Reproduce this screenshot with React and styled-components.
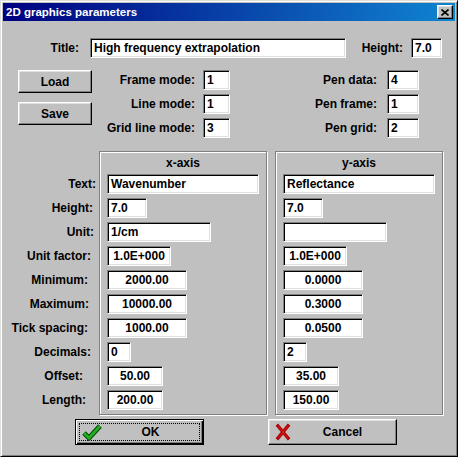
import React from 'react';
import styled, { createGlobalStyle } from 'styled-components';

const Global = createGlobalStyle`
  html, body {
    margin: 0;
    padding: 0;
    background: #c0c0c0;
  }
  * { box-sizing: border-box; }
`;

const Window = styled.div`
  width: 458px;
  height: 457px;
  background: #c0c0c0;
  border: 1px solid;
  border-color: #dfdfdf #000 #000 #dfdfdf;
  box-shadow: inset 1px 1px #fff, inset -1px -1px #808080;
  padding: 2px;
  display: flex;
  flex-direction: column;
  font-family: "Liberation Sans", Arial, sans-serif;
  font-weight: bold;
  font-size: 12px;
  color: #000;
`;

const TitleBar = styled.div`
  height: 18px;
  background: linear-gradient(to right, #000080, #1084d0);
  display: flex;
  align-items: center;
  justify-content: space-between;
  padding: 0 2px 0 3px;
  color: #fff;
  font-size: 11.5px;
`;

const CloseButton = styled.div`
  width: 16px;
  height: 14px;
  background: #c0c0c0;
  border: 1px solid;
  border-color: #fff #000 #000 #fff;
  box-shadow: inset -1px -1px #808080, inset 1px 1px #dfdfdf;
  display: flex;
  align-items: center;
  justify-content: center;
`;

const Body = styled.div`
  flex: 1;
  display: flex;
  flex-direction: column;
  padding-top: 17px;
`;

const TitleRow = styled.div`
  display: flex;
  align-items: center;
  height: 20px;
`;

const Label = styled.div`
  width: ${p => p.$w}px;
  margin-right: ${p => p.$gap}px;
  text-align: right;
  white-space: nowrap;
`;

const Field = styled.div`
  width: ${p => p.$w}px;
  height: 20px;
  flex-shrink: 0;
  background: #fff;
  border: 1px solid;
  border-color: #808080 #fff #fff #808080;
  box-shadow: inset 1px 1px #000, inset -1px -1px #dfdfdf;
  padding: 0 3px;
  display: flex;
  align-items: center;
  justify-content: ${p => (p.$center ? 'center' : 'flex-start')};
  white-space: nowrap;
  overflow: hidden;
`;

const TopSection = styled.div`
  display: flex;
  margin-top: 12px;
`;

const ButtonColumn = styled.div`
  display: flex;
  flex-direction: column;
  gap: 9px;
  margin-left: 15px;
  width: 74px;
`;

const Button = styled.div`
  height: 23px;
  background: #c0c0c0;
  border: 1px solid;
  border-color: #fff #000 #000 #fff;
  box-shadow: inset -1px -1px #808080, inset 1px 1px #dfdfdf;
  display: flex;
  align-items: center;
  justify-content: center;
`;

const ParamGrid = styled.div`
  width: ${p => p.$w}px;
  display: grid;
  grid-template-columns: 1fr ${p => p.$field}px;
  column-gap: ${p => p.$gap}px;
  row-gap: 4px;
  align-items: center;
  align-content: start;
  & > span {
    text-align: right;
    white-space: nowrap;
  }
`;

const AxisSection = styled.div`
  display: flex;
  margin-top: 13px;
  height: 264px;
`;

const LabelColumn = styled.div`
  width: 96px;
  display: flex;
  flex-direction: column;
  gap: 4px;
  padding-top: 23px;
`;

const RowLabel = styled.div`
  height: 20px;
  line-height: 20px;
  text-align: right;
  white-space: nowrap;
  padding-right: ${p => p.$pad}px;
`;

const GroupBox = styled.div`
  width: 168px;
  margin-right: 8px;
  border: 1px solid #808080;
  box-shadow: inset 1px 1px #fff, 1px 1px #fff;
  padding: 2px 7px 0;
  display: flex;
  flex-direction: column;
  gap: 4px;
`;

const GroupTitle = styled.div`
  height: 16px;
  line-height: 18px;
  text-align: center;
`;

const Footer = styled.div`
  display: flex;
  margin-top: 4px;
  padding-left: 72px;
  gap: 64px;
`;

const DialogButton = styled.div`
  width: 129px;
  height: 26px;
  background: #c0c0c0;
  border: 1px solid;
  border-color: ${p => (p.$default ? '#000' : '#fff #000 #000 #fff')};
  box-shadow: ${p =>
    p.$default
      ? 'inset 1px 1px #fff, inset -1px -1px #000, inset -2px -2px #808080'
      : 'inset -1px -1px #808080, inset 1px 1px #dfdfdf'};
  padding: ${p => (p.$default ? '3px' : '2px')};
  display: flex;
`;

const FocusRing = styled.div`
  flex: 1;
  display: flex;
  align-items: center;
  padding-left: 2px;
  border: 1px dotted ${p => (p.$on ? '#000' : 'transparent')};
  & > span {
    flex: 1;
    text-align: center;
  }
`;

const CheckIcon = () => (
  <svg width="20" height="18" viewBox="0 0 20 18">
    <path d="M2 10 L7 15 L18 3" fill="none" stroke="#0d4d0d" strokeWidth="5" strokeLinejoin="miter" />
    <path d="M2 10 L7 15 L18 3" fill="none" stroke="#22b022" strokeWidth="2.6" />
  </svg>
);

const CrossIcon = () => (
  <svg width="18" height="18" viewBox="0 0 18 18">
    <path d="M4 3 L14 15 M14 3 L4 15" fill="none" stroke="#b00000" strokeWidth="3.4" strokeLinecap="square" />
    <path d="M4 3 L14 15 M14 3 L4 15" fill="none" stroke="#d42020" strokeWidth="1" />
  </svg>
);

const CloseGlyph = () => (
  <svg width="8" height="7" viewBox="0 0 8 7">
    <path d="M0.5 0.5 L7.5 6.5 M7.5 0.5 L0.5 6.5" stroke="#000" strokeWidth="1.6" />
  </svg>
);

const modes = [
  ['Frame mode:', '1'],
  ['Line mode:', '1'],
  ['Grid line mode:', '3'],
];

const pens = [
  ['Pen data:', '4'],
  ['Pen frame:', '1'],
  ['Pen grid:', '2'],
];

const rows = [
  { label: 'Text:', pad: 3, w: 152, x: 'Wavenumber', y: 'Reflectance' },
  { label: 'Height:', pad: 6, w: 40, x: '7.0', y: '7.0' },
  { label: 'Unit:', pad: 5, w: 104, x: '1/cm', y: '' },
  { label: 'Unit factor:', pad: 8, w: 64, x: '1.0E+000', y: '1.0E+000', center: true },
  { label: 'Minimum:', pad: 11, w: 80, x: '2000.00', y: '0.0000', center: true },
  { label: 'Maximum:', pad: 10, w: 80, x: '10000.00', y: '0.3000', center: true },
  { label: 'Tick spacing:', pad: 11, w: 80, x: '1000.00', y: '0.0500', center: true },
  { label: 'Decimals:', pad: 8, w: 24, x: '0', y: '2' },
  { label: 'Offset:', pad: 16, w: 56, x: '50.00', y: '35.00', center: true },
  { label: 'Length:', pad: 13, w: 56, x: '200.00', y: '150.00', center: true },
];

function Axis({ title, axis }) {
  return (
    <GroupBox>
      <GroupTitle>{title}</GroupTitle>
      {rows.map(r => (
        <Field key={r.label} $w={r.w} $center={r.center}>{r[axis]}</Field>
      ))}
    </GroupBox>
  );
}

export default function App() {
  return (
    <Window>
      <Global />
      <TitleBar>
        <span>2D graphics parameters</span>
        <CloseButton><CloseGlyph /></CloseButton>
      </TitleBar>
      <Body>
        <TitleRow>
          <Label $w={76} $gap={11}>Title:</Label>
          <Field $w={256}>High frequency extrapolation</Field>
          <Label $w={57} $gap={8}>Height:</Label>
          <Field $w={31}>7.0</Field>
        </TitleRow>

        <TopSection>
          <ButtonColumn>
            <Button>Load</Button>
            <Button>Save</Button>
          </ButtonColumn>
          <ParamGrid $w={138} $field={27} $gap={8}>
            {modes.map(([l, v]) => (
              <React.Fragment key={l}>
                <span>{l}</span>
                <Field $w={27}>{v}</Field>
              </React.Fragment>
            ))}
          </ParamGrid>
          <ParamGrid $w={189} $field={32} $gap={10}>
            {pens.map(([l, v]) => (
              <React.Fragment key={l}>
                <span>{l}</span>
                <Field $w={32}>{v}</Field>
              </React.Fragment>
            ))}
          </ParamGrid>
        </TopSection>

        <AxisSection>
          <LabelColumn>
            {rows.map(r => (
              <RowLabel key={r.label} $pad={r.pad}>{r.label}</RowLabel>
            ))}
          </LabelColumn>
          <Axis title="x-axis" axis="x" />
          <Axis title="y-axis" axis="y" />
        </AxisSection>

        <Footer>
          <DialogButton $default>
            <FocusRing $on>
              <CheckIcon />
              <span>OK</span>
            </FocusRing>
          </DialogButton>
          <DialogButton>
            <FocusRing>
              <CrossIcon />
              <span>Cancel</span>
            </FocusRing>
          </DialogButton>
        </Footer>
      </Body>
    </Window>
  );
}
